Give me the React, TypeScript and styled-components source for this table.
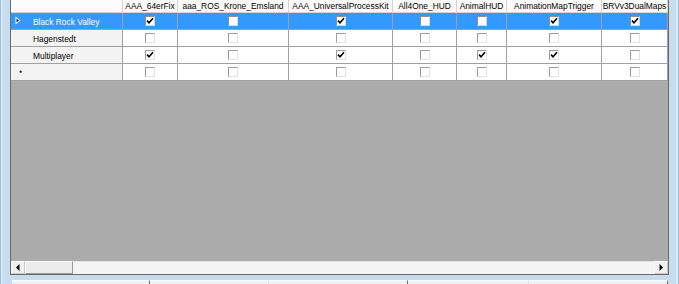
import React from 'react';
import styled, { createGlobalStyle } from 'styled-components';

const GlobalStyle = createGlobalStyle`
  html, body {
    margin: 0;
    padding: 0;
    overflow: hidden;
    background: #c8dcf0;
  }
  body {
    font-family: "Liberation Sans", Arial, sans-serif;
  }
`;

const COLUMNS = [
  'AAA_64erFix',
  'aaa_ROS_Krone_Emsland',
  'AAA_UniversalProcessKit',
  'All4One_HUD',
  'AnimalHUD',
  'AnimationMapTrigger',
  'BRVv3DualMaps',
];

const TEMPLATE = '112px 55px 111px 104px 64px 50px 95px 66px';

type Row = { name: string; values: boolean[]; selected?: boolean; isNew?: boolean };

const ROWS: Row[] = [
  { name: 'Black Rock Valley', values: [true, false, true, false, false, true, true], selected: true },
  { name: 'Hagenstedt', values: [false, false, false, false, false, false, false] },
  { name: 'Multiplayer', values: [true, false, true, false, true, true, false] },
  { name: '', values: [false, false, false, false, false, false, false], isNew: true },
];

const Frame = styled.div`
  width: 679px;
  height: 284px;
  box-sizing: border-box;
  padding: 0 10px;
  display: flex;
  flex-direction: column;
  background: #c8dcf0;
  box-shadow: inset 1px 0 0 #9fbfdf, inset -1px 0 0 #9fbfdf, inset 3px 0 0 #d9e7f5,
    inset -3px 0 0 #d9e7f5;
`;

const Grid = styled.div`
  height: 275px;
  box-sizing: border-box;
  display: flex;
  flex-direction: column;
  border: 1px solid #6a6a6a;
  border-top: none;
  background: #ababab;
  font-size: 8.4px;
  color: #000;
`;

const HeaderRow = styled.div`
  display: grid;
  grid-template-columns: ${TEMPLATE};
  height: 13px;
  background: #fcfcfc;
  border-bottom: 1px solid #d5d5d5;
  box-sizing: border-box;
`;

const HeaderCell = styled.div`
  border-right: 1px solid #d3d3d3;
  text-align: center;
  line-height: 12px;
  white-space: nowrap;
  overflow: hidden;
`;

const DataRow = styled.div<{ $selected?: boolean }>`
  display: grid;
  grid-template-columns: ${TEMPLATE};
  height: 17px;
  background: ${(p) => (p.$selected ? '#3399ff' : '#ffffff')};
`;

const RowHeader = styled.div<{ $selected?: boolean }>`
  display: flex;
  align-items: flex-start;
  box-sizing: border-box;
  border-right: 1px solid #a0a0a0;
  border-bottom: 1px solid #a0a0a0;
  background: ${(p) => (p.$selected ? '#3399ff' : '#f3f3f3')};
  color: ${(p) => (p.$selected ? '#ffffff' : '#000000')};
  padding-top: 2px;
  line-height: 14px;
  white-space: nowrap;
`;

const Glyph = styled.span<{ $inset: number }>`
  width: 22px;
  flex: none;
  box-sizing: border-box;
  padding-left: ${(p) => p.$inset}px;
  display: flex;
  align-items: flex-start;
  height: 14px;
`;

const Cell = styled.div`
  display: flex;
  align-items: center;
  justify-content: center;
  box-sizing: border-box;
  border-right: 1px solid #a0a0a0;
  border-bottom: 1px solid #a0a0a0;
`;

const Box = styled.span<{ $active?: boolean }>`
  width: 10px;
  height: 10px;
  box-sizing: border-box;
  background: #ffffff;
  border: 1px solid;
  border-color: ${(p) =>
    p.$active ? '#8e8e8e #d8d8d8 #d8d8d8 #8e8e8e' : '#9c9c9c #e2e2e2 #e2e2e2 #9c9c9c'};
  display: flex;
  align-items: center;
  justify-content: center;
`;

const Workspace = styled.div`
  flex: 1;
  background: #ababab;
`;

const HScroll = styled.div`
  height: 13px;
  display: flex;
  background: #f4f4f4;
  box-shadow: inset 0 1px 0 #e4e4e4;
`;

const ScrollButton = styled.div`
  width: 14px;
  flex: none;
  display: flex;
  align-items: center;
  justify-content: center;
  background: #f0f0f0;
  box-sizing: border-box;
  border: 1px solid #f8f8f8;
  border-right-color: #c8c8c8;
  border-bottom-color: #c8c8c8;
`;

const Thumb = styled.div`
  width: 48px;
  flex: none;
  box-sizing: border-box;
  background: #ececec;
  border: 1px solid #fafafa;
  border-right-color: #9a9a9a;
  border-bottom-color: #9a9a9a;
`;

const Track = styled.div`
  flex: 1;
`;

const Footer = styled.div`
  flex: 1;
  display: flex;
  align-items: flex-end;
  padding: 0 1px 0 2px;
`;

const Panel = styled.div<{ $w: number; $tick?: boolean }>`
  width: ${(p) => p.$w}px;
  flex: none;
  height: 4px;
  box-sizing: border-box;
  background: #eff1f4;
  border-top: 1px solid #fbfbfb;
  border-right: 1px solid ${(p) => (p.$tick ? '#6f6f6f' : '#dfe3e8')};
`;

const Arrow = () => (
  <svg width="6" height="9" viewBox="0 0 6 9" style={{ marginTop: 1 }}>
    <path d="M0.5 0.5 L5.5 4.5 L0.5 8.5 Z" fill="#ffffff" />
    <path d="M1.5 2.5 L4 4.5 L1.5 6.5 Z" fill="#15153a" />
  </svg>
);

const Check = () => (
  <svg width="8" height="8" viewBox="0 0 8 8">
    <path d="M1 3.6 L3 5.8 L7 1.2" fill="none" stroke="#000" strokeWidth="1.6" />
  </svg>
);

const Tri = ({ dir }: { dir: 'left' | 'right' }) => (
  <svg width="4" height="7" viewBox="0 0 4 7">
    <path d={dir === 'left' ? 'M3.5 0 L0 3.5 L3.5 7 Z' : 'M0.5 0 L4 3.5 L0.5 7 Z'} fill="#000" />
  </svg>
);

export default function App() {
  return (
    <>
      <GlobalStyle />
      <Frame>
        <Grid>
          <HeaderRow>
            <HeaderCell />
            {COLUMNS.map((c) => (
              <HeaderCell key={c}>{c}</HeaderCell>
            ))}
          </HeaderRow>
          {ROWS.map((row, i) => (
            <DataRow key={i} $selected={row.selected}>
              <RowHeader $selected={row.selected}>
                <Glyph $inset={row.isNew ? 8 : 4}>
                  {row.selected ? <Arrow /> : row.isNew ? '*' : null}
                </Glyph>
                {row.name}
              </RowHeader>
              {row.values.map((v, j) => (
                <Cell key={j}>
                  <Box $active={row.selected}>{v ? <Check /> : null}</Box>
                </Cell>
              ))}
            </DataRow>
          ))}
          <Workspace />
          <HScroll>
            <ScrollButton>
              <Tri dir="left" />
            </ScrollButton>
            <Thumb />
            <Track />
            <ScrollButton>
              <Tri dir="right" />
            </ScrollButton>
          </HScroll>
        </Grid>
        <Footer>
          <Panel $w={138} $tick />
          <Panel $w={119} />
          <Panel $w={139} $tick />
          <Panel $w={121} />
          <Panel $w={139} $tick />
        </Footer>
      </Frame>
    </>
  );
}
